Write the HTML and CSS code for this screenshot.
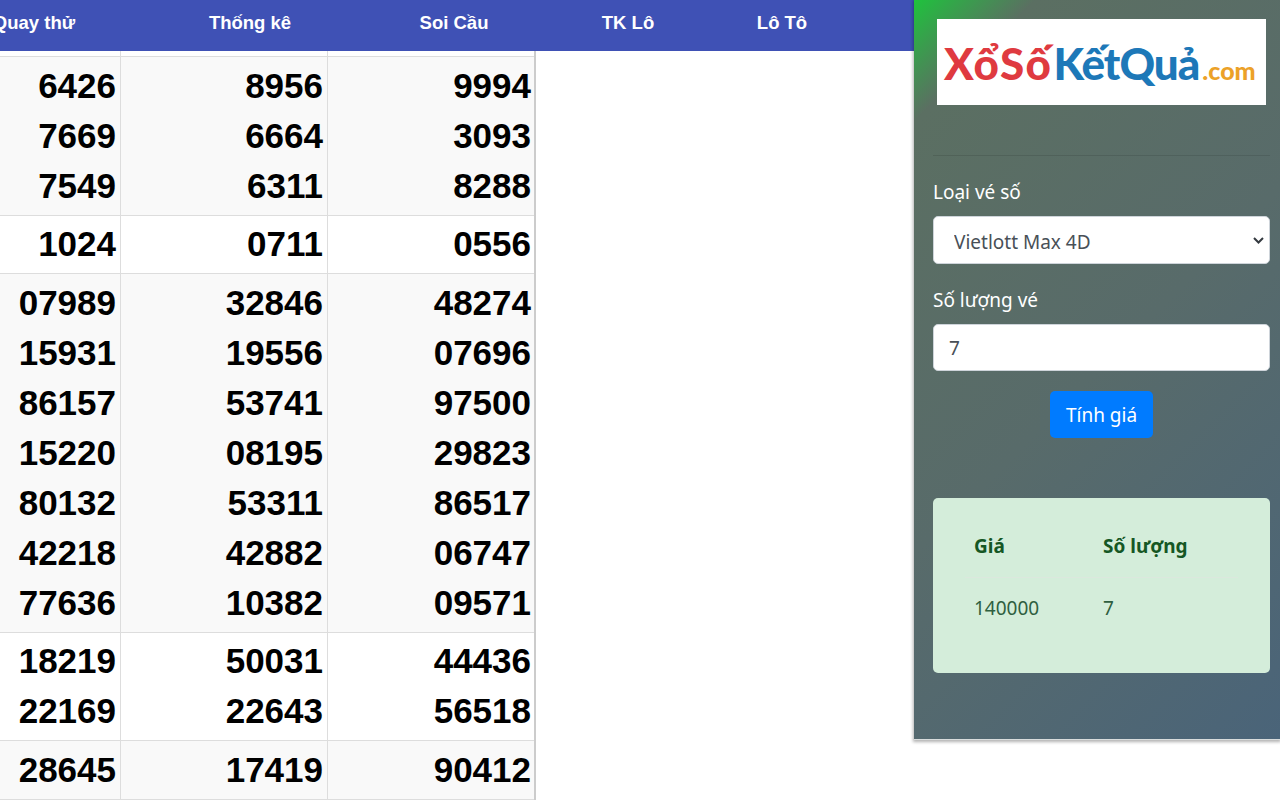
FILE: index.html
```html
<!DOCTYPE html>
<html lang="vi">
<head>
    <meta charset="UTF-8">
    <meta name="viewport" content="width=device-width, initial-scale=1.0">
    <title>Xổ Số Kết Quả</title>
    <link rel="stylesheet" href="styles.css">
</head>
<body>

    <div class="page">
        <div class="main">
            <div class="nav">
                <a class="nav-item nav-first">Quay thử</a>
                <a class="nav-item nav-wide">Thống kê</a>
                <a class="nav-item nav-mid">Soi Cầu</a>
                <a class="nav-item nav-small">TK Lô</a>
                <a class="nav-item nav-small">Lô Tô</a>
            </div>

            <div class="results">
                <table class="result-table">
                    <tr class="row-gap"><td></td><td></td><td></td></tr>
                    <tr class="row-odd">
                        <td><div>6426</div><div>7669</div><div>7549</div></td>
                        <td><div>8956</div><div>6664</div><div>6311</div></td>
                        <td><div>9994</div><div>3093</div><div>8288</div></td>
                    </tr>
                    <tr class="row-tight">
                        <td><div>1024</div></td>
                        <td><div>0711</div></td>
                        <td><div>0556</div></td>
                    </tr>
                    <tr class="row-odd">
                        <td><div>07989</div><div>15931</div><div>86157</div><div>15220</div><div>80132</div><div>42218</div><div>77636</div></td>
                        <td><div>32846</div><div>19556</div><div>53741</div><div>08195</div><div>53311</div><div>42882</div><div>10382</div></td>
                        <td><div>48274</div><div>07696</div><div>97500</div><div>29823</div><div>86517</div><div>06747</div><div>09571</div></td>
                    </tr>
                    <tr class="row-tight">
                        <td><div>18219</div><div>22169</div></td>
                        <td><div>50031</div><div>22643</div></td>
                        <td><div>44436</div><div>56518</div></td>
                    </tr>
                    <tr class="row-odd">
                        <td><div>28645</div></td>
                        <td><div>17419</div></td>
                        <td><div>90412</div></td>
                    </tr>
                </table>
            </div>
        </div>

        <div class="sidebar">
            <div class="logo">
                <span class="logo-red">Xổ</span><span class="logo-red">Số</span><span class="logo-blue">KếtQuả</span><span class="logo-orange">.com</span>
            </div>
            <hr class="divider">

            <label class="field-label">Loại vé số</label>
            <select class="field field-select">
                <option>Vietlott Max 4D</option>
            </select>

            <label class="field-label">Số lượng vé</label>
            <input class="field field-input" type="text" value="7">

            <div class="btn-row">
                <button class="btn-primary">Tính giá</button>
            </div>

            <div class="alert">
                <table class="price-table">
                    <tr><th>Giá</th><th>Số lượng</th></tr>
                    <tr><td>140000</td><td>7</td></tr>
                </table>
            </div>
        </div>
    </div>

</body>
</html>
```

FILE: styles.css
```css
html, body {
    margin: 0;
    padding: 0;
    height: 800px;
    overflow: hidden;
    background: white;
}

.page {
    display: flex;
    align-items: flex-start;
    width: 1280px;
    height: 800px;
    overflow: hidden;
}

.main {
    width: 914px;
    flex-shrink: 0;
    overflow: hidden;
}

.nav {
    display: flex;
    height: 51px;
    margin-left: -75px;
    background: #3f51b5;
}

.nav-item {
    padding-top: 12px;
    text-align: center;
    font-family: "Liberation Sans", sans-serif;
    font-size: 18.5px;
    line-height: 21px;
    font-weight: bold;
    color: white;
}

.nav-first { width: 218px; }
.nav-wide { width: 214px; }
.nav-mid { width: 194px; }
.nav-small { width: 154px; }

.results {
    width: 534px;
    height: 749px;
    border-right: 2px solid #ccc;
    overflow: hidden;
}

.result-table {
    margin-left: -87px;
    border-collapse: collapse;
    table-layout: fixed;
    width: 622px;
    font-family: "Liberation Sans", sans-serif;
    font-size: 35px;
    font-weight: bold;
    color: black;
}

.result-table td {
    padding: 4px;
    border: 1px solid #ddd;
    text-align: right;
    line-height: 50px;
}

.result-table td:last-child { padding-right: 3px; }

.result-table .row-gap td {
    height: 5px;
    padding: 0;
    border-top: 0;
    line-height: 5px;
}

.result-table .row-tight td { padding-top: 3px; }

.row-odd { background: #f9f9f9; }

.sidebar {
    box-sizing: border-box;
    width: 366px;
    height: 740px;
    flex-shrink: 0;
    padding: 19px 10px 0 19px;
    background: linear-gradient(135deg, #1fc23d 0, #5b6f62 11%, #586b6a 50%, #4a6479 100%);
    box-shadow: 0 1px 3px 1px rgba(0, 0, 0, 0.3), inset 0 -1px 0 #d8dcdc;
    font-family: "Noto Sans", sans-serif;
}

.logo {
    height: 86px;
    margin: 0 4px;
    padding-left: 7px;
    background: white;
    font-family: "Lato", sans-serif;
    font-size: 44px;
    font-weight: 900;
    line-height: 88px;
    white-space: nowrap;
    overflow: hidden;
}

.logo-red { letter-spacing: 1.5px; color: #df3a40; }
.logo-blue { margin-left: 1px; letter-spacing: -1px; color: #1d78b8; }
.logo-orange { margin-left: 3px; font-size: 25px; color: #eca128; }

.divider {
    margin: 50px 0 0;
    border: 0;
    border-top: 1px solid rgba(0, 0, 0, 0.1);
}

.field-label {
    display: block;
    margin: 23px 0 10px;
    font-size: 19px;
    line-height: 27px;
    color: white;
}

.field {
    display: block;
    box-sizing: border-box;
    width: 337px;
    border: 1px solid #ced4da;
    border-radius: 5px;
    background: white;
    font-family: "Noto Sans", sans-serif;
    font-size: 19px;
    color: #495057;
}

.field-select {
    height: 48px;
    padding: 3px 0 0 20px;
    appearance: none;
    background: white url("data:image/svg+xml,%3Csvg xmlns='http://www.w3.org/2000/svg' width='11' height='7' viewBox='0 0 11 7'%3E%3Cpath d='M1 1l4.5 4.5L10 1' fill='none' stroke='%23343a40' stroke-width='2'/%3E%3C/svg%3E") no-repeat right 5px center;
}

.field-input {
    height: 47px;
    padding: 0 15px;
}

.btn-row {
    display: flex;
    justify-content: center;
    margin-top: 20px;
}

.btn-primary {
    width: 103px;
    height: 47px;
    border: 0;
    border-radius: 5px;
    background: #007bff;
    font-family: "Noto Sans", sans-serif;
    font-size: 19px;
    color: white;
}

.alert {
    margin-top: 60px;
    padding: 16px 32px 33px;
    border-radius: 5px;
    background: #d4edda;
    color: #155724;
}

.price-table {
    width: 273px;
    border-collapse: collapse;
    font-size: 19px;
    line-height: 27px;
}

.price-table th,
.price-table td {
    text-align: left;
}

.price-table th {
    padding: 19px 9px 17px;
    border-bottom: 1px solid #dbe8dd;
    font-weight: bold;
}

.price-table td {
    padding: 17px 9px 18px;
    color: #2f5f3f;
}

.price-table th:first-child { width: 111px; }
```
